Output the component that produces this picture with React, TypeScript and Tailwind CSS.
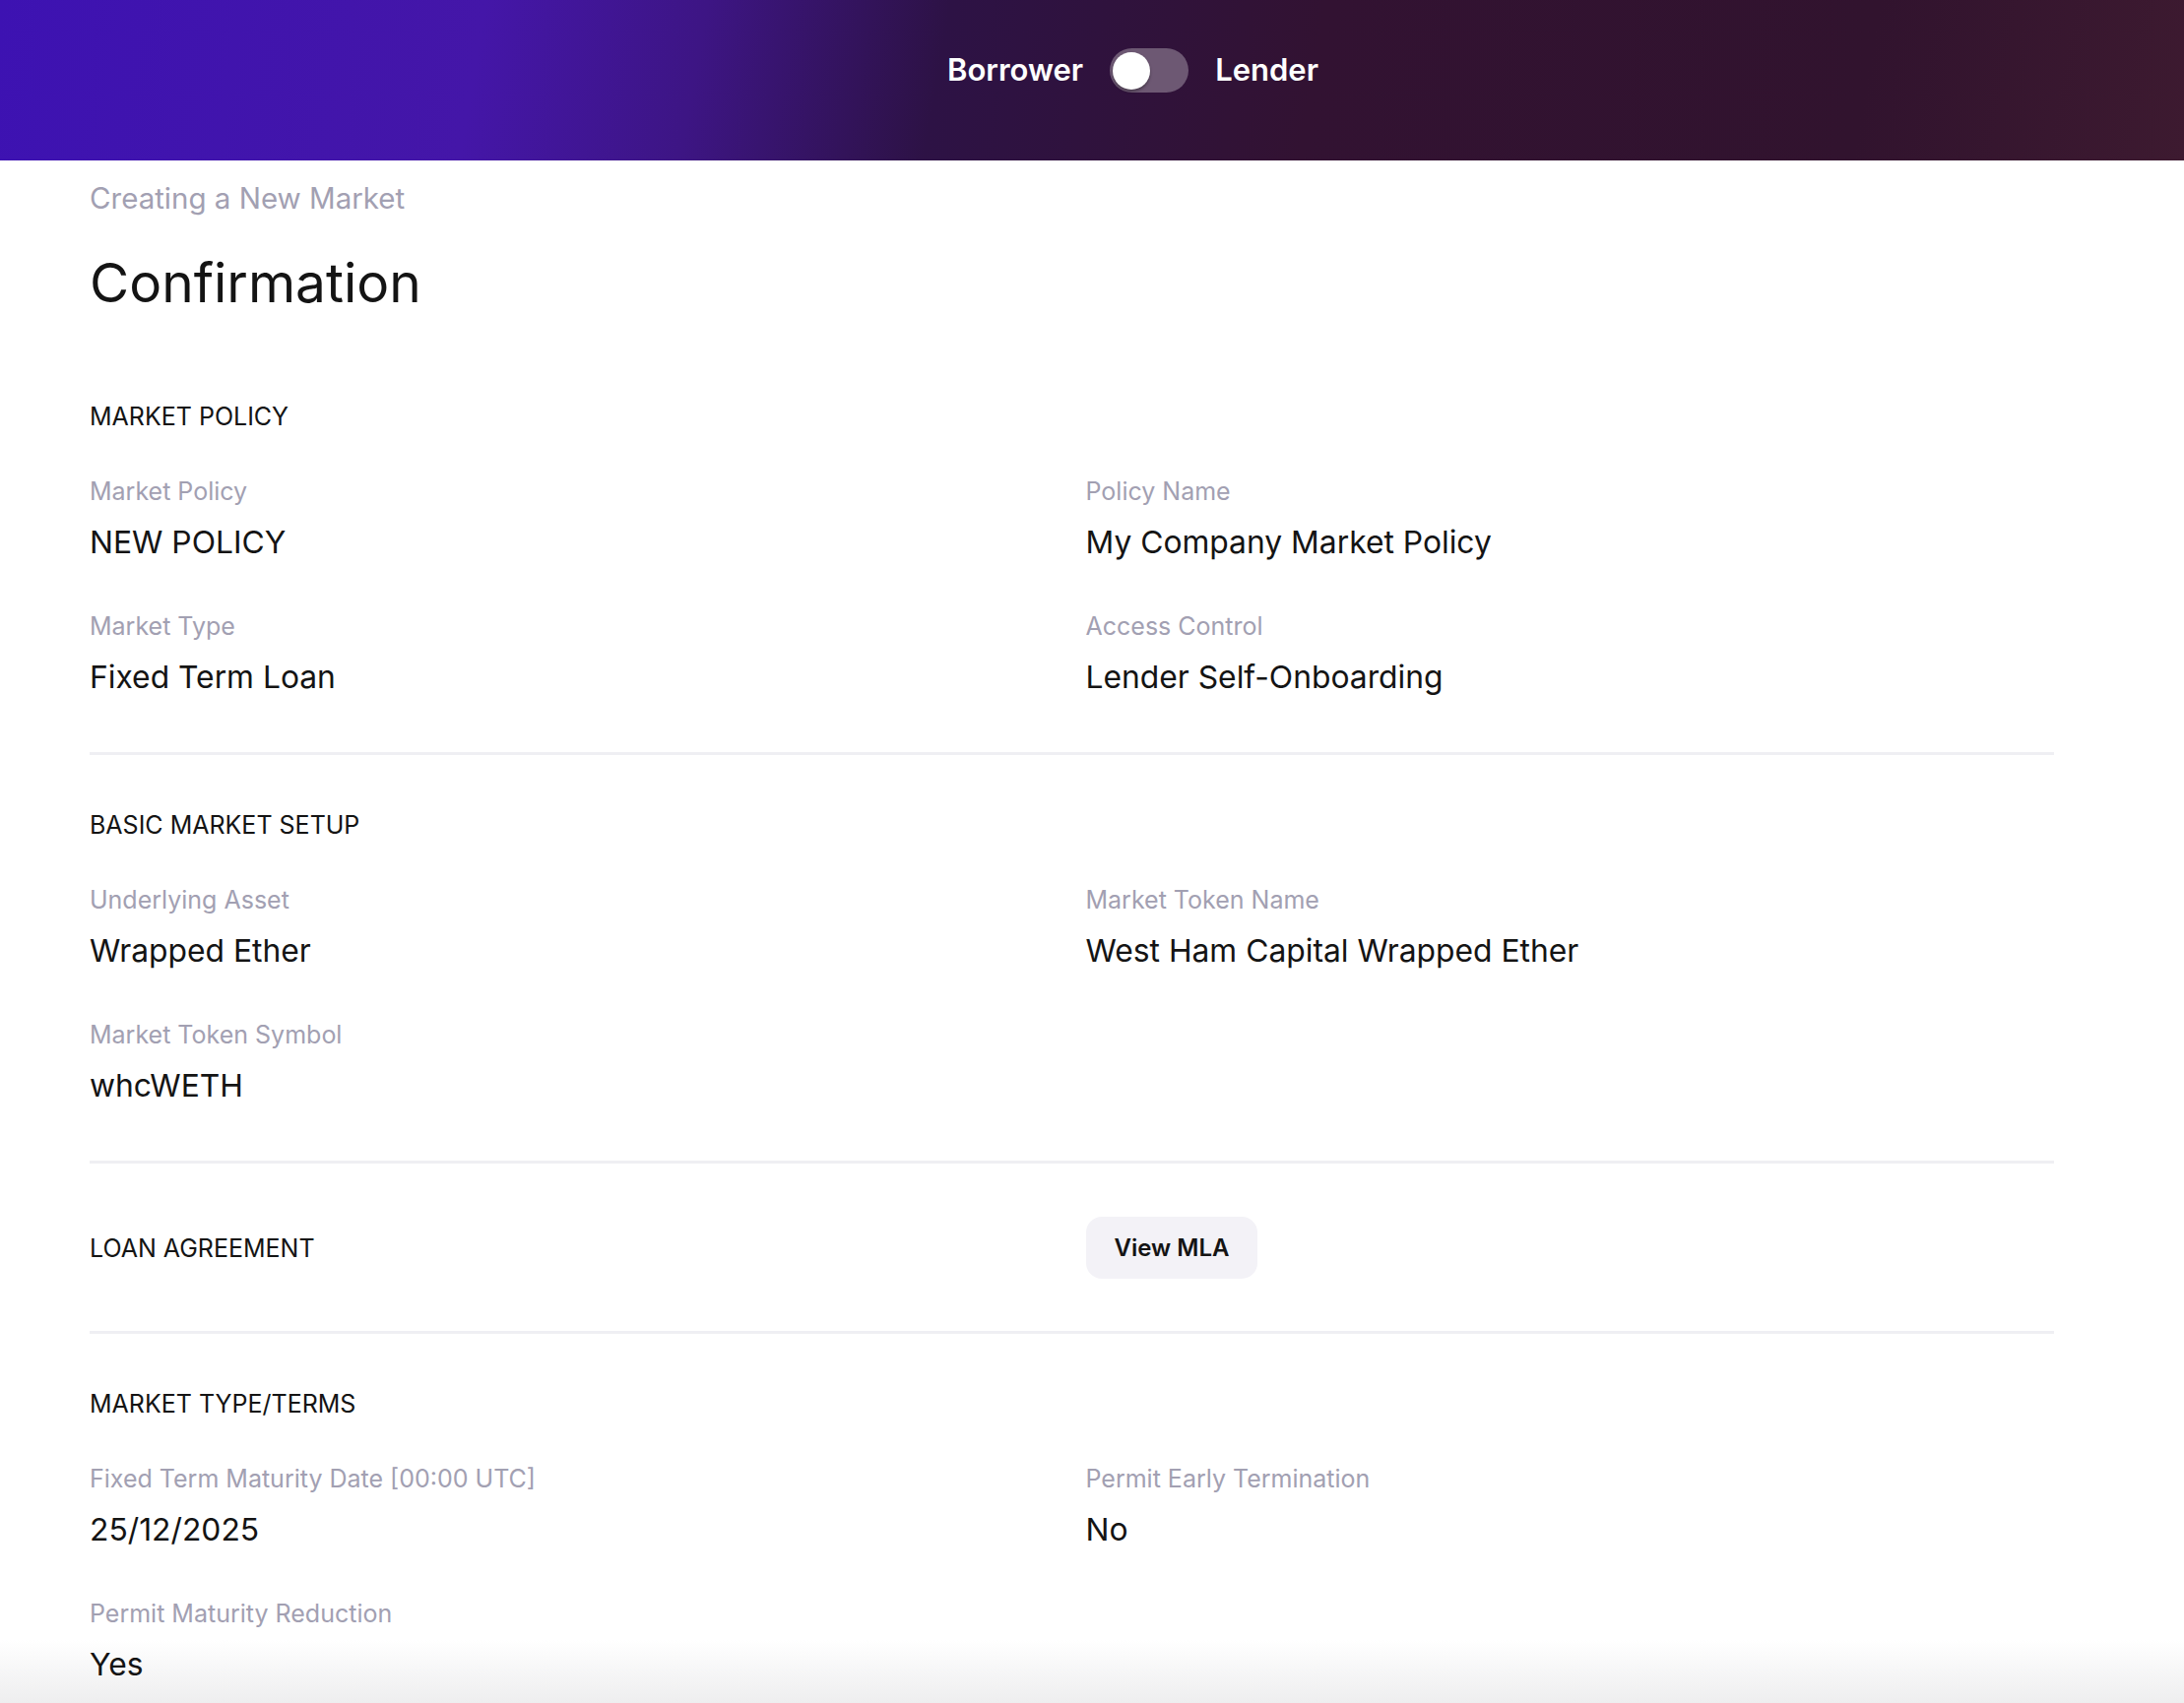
import React from "react";

type Field = { label: string; value: string };

const policyFields: Field[] = [
  { label: "Market Policy", value: "NEW POLICY" },
  { label: "Policy Name", value: "My Company Market Policy" },
  { label: "Market Type", value: "Fixed Term Loan" },
  { label: "Access Control", value: "Lender Self-Onboarding" },
];

const setupFields: Field[] = [
  { label: "Underlying Asset", value: "Wrapped Ether" },
  { label: "Market Token Name", value: "West Ham Capital Wrapped Ether" },
  { label: "Market Token Symbol", value: "whcWETH" },
];

const termsFields: Field[] = [
  { label: "Fixed Term Maturity Date [00:00 UTC]", value: "25/12/2025" },
  { label: "Permit Early Termination", value: "No" },
  { label: "Permit Maturity Reduction", value: "Yes" },
];

function Divider() {
  return <div className="h-[3px] w-full bg-[#efeff3]" />;
}

function SectionTitle({ children }: { children: React.ReactNode }) {
  return <h3 className="text-[25px] leading-[32px] font-normal text-[#141414] uppercase">{children}</h3>;
}

function FieldGrid({ fields }: { fields: Field[] }) {
  return (
    <div className="mt-[44px] grid grid-cols-2 gap-x-[28px] gap-y-[49px]">
      {fields.map((f) => (
        <div key={f.label} className="flex flex-col">
          <span className="text-[25px] leading-[32px] text-[#a2a0b2]">{f.label}</span>
          <span className="mt-[16px] text-[31.8px] leading-[40px] text-[#141414]">{f.value}</span>
        </div>
      ))}
    </div>
  );
}

function Section({ title, fields, first }: { title: string; fields: Field[]; first?: boolean }) {
  return (
    <section className={`${first ? "pt-[88px]" : "pt-[55px]"} pb-[56px]`}>
      <SectionTitle>{title}</SectionTitle>
      <FieldGrid fields={fields} />
    </section>
  );
}

export default function App() {
  return (
    <div
      className="relative h-[1730px] overflow-hidden bg-white"
      style={{ fontFamily: "Inter, 'Noto Sans', sans-serif" }}
    >
      {/* bottom fade, behind content */}
      <div className="pointer-events-none absolute bottom-0 left-0 right-0 h-[64px] bg-gradient-to-b from-white to-[#eeeeef]" />

      {/* Header */}
      <header className="relative h-[163px] w-full bg-[linear-gradient(100deg,#3d12b2_0%,#4416a8_22%,#3d1584_32%,#2d1245_43%,#321232_60%,#31132e_85%,#3d1a30_100%)] flex justify-center items-start pt-[49px] pl-[83px]">
        <div className="flex items-center h-[45px]">
          <span className="text-[31px] font-semibold text-white">Borrower</span>
          <button
            className="ml-[27px] mr-[27px] w-[80px] h-[45px] rounded-full bg-[#6d5873] flex items-center px-[3px]"
            aria-label="Toggle role"
          >
            <span className="block w-[38px] h-[38px] rounded-full bg-white shadow-[0_2px_3px_rgba(0,0,0,0.35)]" />
          </button>
          <span className="text-[31px] font-semibold text-white">Lender</span>
        </div>
      </header>

      <main className="relative pl-[91px] pr-[132px]">
        <p className="pt-[20px] text-[29.5px] leading-[36px] text-[#a2a0b2]">Creating a New Market</p>
        <h1 className="mt-[36px] text-[55px] leading-[64px] font-normal text-[#141414]">Confirmation</h1>

        <Section title="Market Policy" fields={policyFields} first />
        <Divider />
        <Section title="Basic Market Setup" fields={setupFields} />
        <Divider />

        <section className="pt-[54px] pb-[53px] grid grid-cols-2 gap-x-[28px] items-center">
          <SectionTitle>Loan Agreement</SectionTitle>
          <div>
            <button className="h-[63px] px-[29px] rounded-[16px] bg-[#f3f2f7] text-[24px] font-semibold text-[#141414]">
              View MLA
            </button>
          </div>
        </section>
        <Divider />
        <Section title="Market Type/Terms" fields={termsFields} />
      </main>
    </div>
  );
}
